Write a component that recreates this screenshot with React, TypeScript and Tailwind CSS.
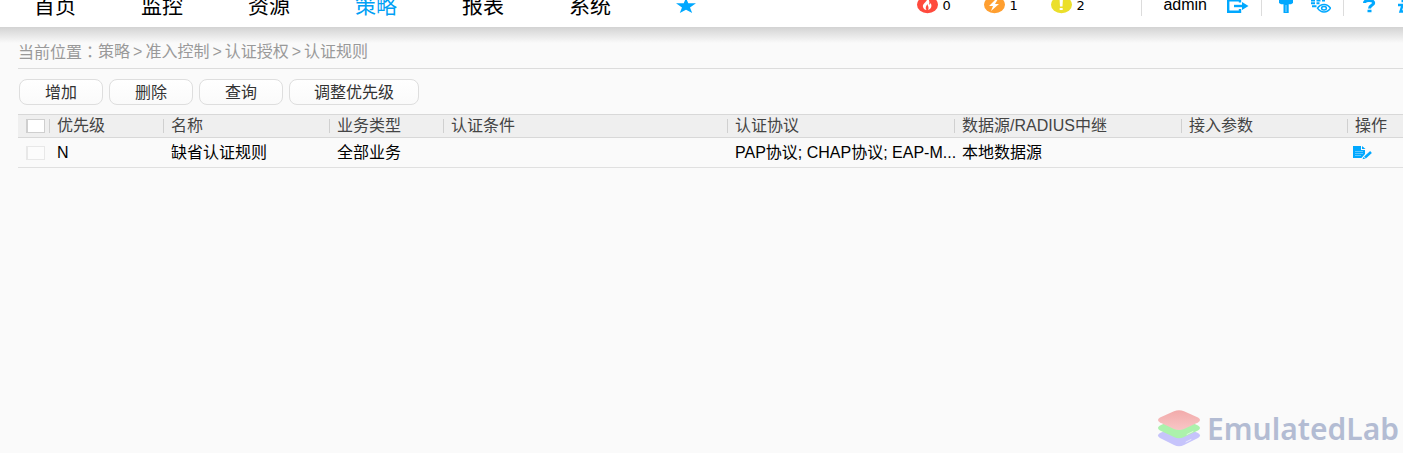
import type { ReactNode } from 'react'
import { clsx } from 'clsx'

const NAV = ['首页', '监控', '资源', '策略', '报表', '系统']
const CRUMBS = ['策略', '准入控制', '认证授权', '认证规则']
const ACTIONS = ['增加', '删除', '查询', '调整优先级']

// the condition column takes whatever width is left
const COLUMNS = [
  { title: '优先级', width: 'w-[114px]' },
  { title: '名称', width: 'w-[166px]' },
  { title: '业务类型', width: 'w-[114px]' },
  { title: '认证条件', width: '' },
  { title: '认证协议', width: 'w-[227px]' },
  { title: '数据源/RADIUS中继', width: 'w-[227px]' },
  { title: '接入参数', width: 'w-[166px]' },
  { title: '操作', width: 'w-[56px]' },
]

const RULES = [
  {
    priority: 'N',
    name: '缺省认证规则',
    service: '全部业务',
    condition: '',
    protocol: 'PAP协议; CHAP协议; EAP-M...',
    source: '本地数据源',
    params: '',
  },
]

export default function App() {
  return (
    <div className="relative min-h-screen overflow-hidden bg-[#fafafa] font-['Liberation_Sans','Noto_Sans_CJK_SC',sans-serif] text-base leading-4 text-black">
      <TopBar />
      <div className="h-4 bg-linear-to-b from-[#d3d3d3] to-[#fafafa]" />

      <main className="pl-[18px]">
        <Breadcrumb />
        <div className="flex gap-1.5 pt-[10px] pb-[9px] pl-px">
          {ACTIONS.map((label) => (
            <button
              key={label}
              type="button"
              className="h-[26px] min-w-[84px] rounded-lg border border-[#dedede] bg-linear-to-b from-white to-[#fafafa] px-6 pt-0.5 text-[#333]"
            >
              {label}
            </button>
          ))}
        </div>
        <RuleTable />
      </main>

      <Watermark />
    </div>
  )
}

function TopBar() {
  return (
    <header className="flex h-[27px] items-start overflow-hidden bg-white">
      <nav className="flex gap-[65px] pl-[34px]">
        {NAV.map((item) => (
          <a
            key={item}
            href="#"
            className={clsx('h-3 text-[21px] leading-3', item === '策略' ? 'text-[#00a0f5]' : 'text-black')}
          >
            {item}
          </a>
        ))}
        <a href="#" aria-label="收藏">
          <svg width="20" height="14" viewBox="0 0 20 14" fill="#00a8ff">
            <path d="M10-2 12.300 3.300H20L14 7.400 16.200 13 10 9.800 3.800 13 6 7.400 0 3.300h7.700z" />
          </svg>
        </a>
      </nav>

      <div className="ml-auto flex items-start">
        <div className="mr-14 flex gap-[33px]">
          <Alarm count={0} color="#ff4a3d">
            <path d="M10-2c1 4-5 5-4 9 .5 2 2 3 3.500 3C8 8 9 6 10.500 4c0 2 2 3 .5 6 4-1 4-5 2.500-7-.3 1-1 1.500-1.500 1.500C13 2 12-1 10-2z" fill="#fff" />
          </Alarm>
          <Alarm count={1} color="#ff9f30">
            <path d="M12-1 5 6h4l-2 5 8-7h-4l3-5z" fill="#fff" />
          </Alarm>
          <Alarm count={2} color="#ebdf2b">
            <path d="M8.500-2h3.500L11.500 6.500H9zM8.700 8h3v2h-3z" fill="#fff" />
          </Alarm>
        </div>
        <Divider />
        <span className="ml-[21px] h-[10px] leading-[10px]">admin</span>
        <a href="#" aria-label="注销" className="ml-5">
          <svg width="22" height="14" viewBox="0 0 22 14" fill="none" stroke="#00a8ff" strokeWidth="2.400">
            <path d="M13 2.500V.3H1.200V11.800H13V9" />
            <path d="M7 6h10" />
            <path d="M15 2 21.500 6 15 10z" fill="#00a8ff" stroke="none" />
          </svg>
        </a>
        <div className="ml-3">
          <Divider />
        </div>
        <a href="#" aria-label="固定" className="ml-[17px]">
          <svg width="14" height="14" viewBox="0 0 14 14" fill="#00a8ff">
            <path d="M0 0h14v3l-2 1.200H9.700V13H4.500V4.200H2L0 3z" />
            <path d="M7 5v7" stroke="#8fd8ff" strokeWidth="1" />
          </svg>
        </a>
        <a href="#" aria-label="视图" className="ml-[18px]">
          <svg width="20" height="14" viewBox="0 0 20 14" fill="none" stroke="#00a8ff">
            <path d="M0 .5h4m1.500 0h4m1.500 0h3M0 3.300h4m1.500 0h3M1 6.300h4.500" strokeWidth="2" />
            <path d="M6.500 8.200Q9 4.500 13 4.500t6.500 3.700Q17 12 13 12T6.500 8.200z" strokeWidth="1.500" />
            <ellipse cx="13" cy="8.200" rx="2.400" ry="1.700" strokeWidth="1.500" />
          </svg>
        </a>
        <div className="ml-3">
          <Divider />
        </div>
        <a href="#" aria-label="帮助" className="ml-[19px]">
          <svg width="13" height="14" viewBox="0 0 13 14" fill="none" stroke="#00a8ff" strokeWidth="3">
            <path d="M1.500 3Q1.500.5 6 .5t4.700 2.500c0 2-4.200 2-4.200 5.500" />
            <path d="M4.500 11h4" strokeWidth="2.500" />
          </svg>
        </a>
        <a href="#" aria-label="关于" className="ml-[21px]">
          <svg width="6" height="14" viewBox="0 0 6 14" fill="none" stroke="#00a8ff" strokeWidth="2.400">
            <path d="M1 5h4.500L3.500 11.500h3M4.500 1h2" />
          </svg>
        </a>
      </div>
    </header>
  )
}

function Alarm({ count, color, children }: { count: number; color: string; children: ReactNode }) {
  return (
    <a href="#" className="flex items-start gap-1">
      <svg width="21" height="14" viewBox="0 0 21 14">
        <ellipse cx="10.500" cy="4.700" rx="10.500" ry="8.500" fill={color} />
        {children}
      </svg>
      <span className="h-3 w-[9px] font-['DejaVu_Sans',sans-serif] text-[13px] leading-3">{count}</span>
    </a>
  )
}

function Divider() {
  return <div className="h-4 w-px bg-[#dcdcdc]" />
}

function Breadcrumb() {
  return (
    <nav className="flex h-[26px] items-center gap-[3px] border-b border-[#dcdcdc] pb-2 text-[#999]">
      <span className="-mr-[3px]">
        当前位置<span className="font-['Noto_Sans_CJK_TC',sans-serif]" lang="zh-TW">：</span>
      </span>
      {CRUMBS.map((crumb, i) => (
        <span key={crumb} className="flex gap-[3px]">
          {i > 0 && <span>&gt;</span>}
          <a href="#">{crumb}</a>
        </span>
      ))}
    </nav>
  )
}

function RuleTable() {
  return (
    <table className="w-full table-fixed border-collapse text-left whitespace-nowrap">
      <thead>
        <tr className="h-[23px] border-y border-[#d8d8d8] bg-[#efefef] text-[#444]">
          <th className="w-[31px] p-0 pl-2">
            <Tick label="全选" className="border-[#cfcfcf] bg-white" />
          </th>
          {COLUMNS.map((col) => (
            <th key={col.title} className={clsx('p-0 font-normal', col.width)}>
              <div className="h-[14px] border-l border-[#d0d0d0] pl-[7px] leading-[14px]">{col.title}</div>
            </th>
          ))}
        </tr>
      </thead>
      <tbody>
        {RULES.map((rule) => (
          <tr key={rule.name} className="h-[30px] border-b border-[#e0e0e0]">
            <td className="p-0 pl-2">
              <Tick label={rule.name} className="border-[#e8e8e8] bg-[#fcfcfc]" />
            </td>
            <td className="p-0 pl-2">{rule.priority}</td>
            <td className="p-0 pl-2">{rule.name}</td>
            <td className="p-0 pl-2">{rule.service}</td>
            <td className="p-0 pl-2">{rule.condition}</td>
            <td className="p-0 pl-2">{rule.protocol}</td>
            <td className="p-0 pl-2">{rule.source}</td>
            <td className="p-0 pl-2">{rule.params}</td>
            <td className="p-0 pl-1.5">
              <button type="button" aria-label="编辑" className="block">
                <svg width="20" height="14" viewBox="0 0 20 14">
                  <path d="M0 0h8v4h4v4L8.500 12H0z" fill="#00a8ff" />
                  <path d="M9 0l3.500 3H9z" fill="#00a8ff" />
                  <path d="M2 5.500h8M2 7.500h8M2 9.500h6" stroke="#5cc6ff" />
                  <path d="M18 6 12 11.500" stroke="#00a8ff" strokeWidth="2.500" />
                  <path d="M10.500 11l2 1.500-3 .8z" fill="#00a8ff" />
                </svg>
              </button>
            </td>
          </tr>
        ))}
      </tbody>
    </table>
  )
}

function Tick({ label, className }: { label: string; className: string }) {
  return (
    <input
      type="checkbox"
      aria-label={label}
      className={clsx('block h-[14px] w-[19px] appearance-none border border-l-2', className)}
    />
  )
}

function Watermark() {
  return (
    <div className="absolute right-1 bottom-1.5 flex items-center gap-1.5">
      <svg width="44" height="37" viewBox="0 0 44 37">
        <defs>
          <linearGradient id="wm-red" x1="0" y1="0" x2="0" y2="1">
            <stop offset="0" stopColor="#f2aaaa" />
            <stop offset="1" stopColor="#f8c6c6" />
          </linearGradient>
        </defs>
        <path d="M3 23 17 17q5-2 10 0l14 6q4 2.500 0 5L27 35q-5 2.500-10 0L3 28q-4-2.500 0-5z" fill="#c6c4fb" />
        <path d="M3 15.500 17 9q5-2 10 0l14 6.500q4 2.500 0 5L27 27q-5 2.500-10 0L3 20.500q-4-2.500 0-5z" fill="#acf2ac" />
        <path d="M3 7.500 17 1.200q5-2 10 0l14 6.300q4 2.500 0 5L27 19q-5 2-10 0L3 12.500q-4-2.500 0-5z" fill="url(#wm-red)" />
        <path d="M30 24.500l6-3M29 32l5-2.500" stroke="#fff" strokeOpacity=".6" strokeLinecap="round" />
      </svg>
      <span className="font-['Noto_Sans',sans-serif] text-[30px] leading-9 font-semibold text-[#b3bcd3]">EmulatedLab</span>
    </div>
  )
}
